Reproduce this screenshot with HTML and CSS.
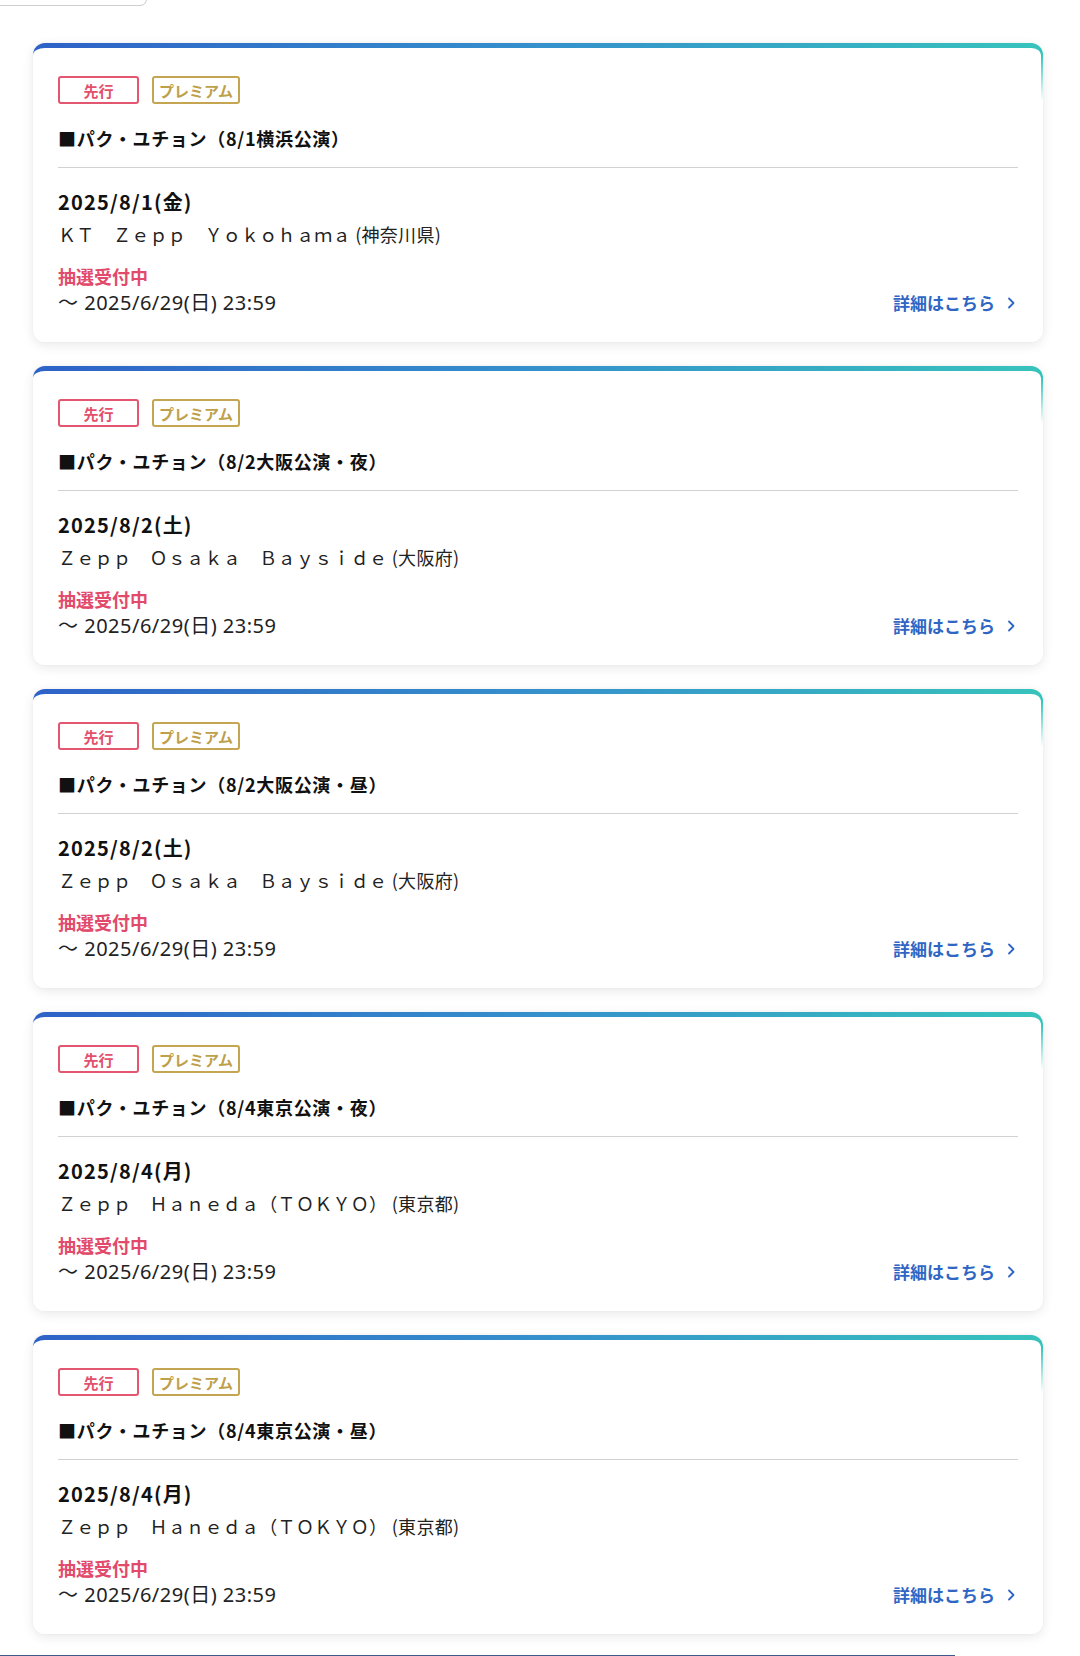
FILE: index.html
```html
<!DOCTYPE html>
<html lang="ja">
<head>
<meta charset="utf-8">
<title>公演一覧</title>
<link rel="stylesheet" href="styles.css">
</head>
<body>
<div class="top-btn"></div>
<ul class="list">
  <li class="card">
    <div class="tags"><span class="tag tag-red">先行</span><span class="tag tag-gold">プレミアム</span></div>
    <h2 class="title">■パク・ユチョン（8/1横浜公演）</h2>
    <div class="date">2025/8/1(金)</div>
    <div class="venue">ＫＴ　Ｚｅｐｐ　Ｙｏｋｏｈａｍａ (神奈川県)</div>
    <div class="status">抽選受付中</div>
    <div class="foot"><span class="deadline">〜 2025/6/29(日) 23:59</span><a class="more" href="#">詳細はこちら<svg class="chev" viewBox="0 0 8 12" width="8" height="12"><path d="M2 1.5 6.5 6 2 10.5" fill="none" stroke="currentColor" stroke-width="1.8" stroke-linecap="round" stroke-linejoin="round"/></svg></a></div>
  </li>
  <li class="card">
    <div class="tags"><span class="tag tag-red">先行</span><span class="tag tag-gold">プレミアム</span></div>
    <h2 class="title">■パク・ユチョン（8/2大阪公演・夜）</h2>
    <div class="date">2025/8/2(土)</div>
    <div class="venue">Ｚｅｐｐ　Ｏｓａｋａ　Ｂａｙｓｉｄｅ (大阪府)</div>
    <div class="status">抽選受付中</div>
    <div class="foot"><span class="deadline">〜 2025/6/29(日) 23:59</span><a class="more" href="#">詳細はこちら<svg class="chev" viewBox="0 0 8 12" width="8" height="12"><path d="M2 1.5 6.5 6 2 10.5" fill="none" stroke="currentColor" stroke-width="1.8" stroke-linecap="round" stroke-linejoin="round"/></svg></a></div>
  </li>
  <li class="card">
    <div class="tags"><span class="tag tag-red">先行</span><span class="tag tag-gold">プレミアム</span></div>
    <h2 class="title">■パク・ユチョン（8/2大阪公演・昼）</h2>
    <div class="date">2025/8/2(土)</div>
    <div class="venue">Ｚｅｐｐ　Ｏｓａｋａ　Ｂａｙｓｉｄｅ (大阪府)</div>
    <div class="status">抽選受付中</div>
    <div class="foot"><span class="deadline">〜 2025/6/29(日) 23:59</span><a class="more" href="#">詳細はこちら<svg class="chev" viewBox="0 0 8 12" width="8" height="12"><path d="M2 1.5 6.5 6 2 10.5" fill="none" stroke="currentColor" stroke-width="1.8" stroke-linecap="round" stroke-linejoin="round"/></svg></a></div>
  </li>
  <li class="card">
    <div class="tags"><span class="tag tag-red">先行</span><span class="tag tag-gold">プレミアム</span></div>
    <h2 class="title">■パク・ユチョン（8/4東京公演・夜）</h2>
    <div class="date">2025/8/4(月)</div>
    <div class="venue">Ｚｅｐｐ　Ｈａｎｅｄａ（ＴＯＫＹＯ） (東京都)</div>
    <div class="status">抽選受付中</div>
    <div class="foot"><span class="deadline">〜 2025/6/29(日) 23:59</span><a class="more" href="#">詳細はこちら<svg class="chev" viewBox="0 0 8 12" width="8" height="12"><path d="M2 1.5 6.5 6 2 10.5" fill="none" stroke="currentColor" stroke-width="1.8" stroke-linecap="round" stroke-linejoin="round"/></svg></a></div>
  </li>
  <li class="card">
    <div class="tags"><span class="tag tag-red">先行</span><span class="tag tag-gold">プレミアム</span></div>
    <h2 class="title">■パク・ユチョン（8/4東京公演・昼）</h2>
    <div class="date">2025/8/4(月)</div>
    <div class="venue">Ｚｅｐｐ　Ｈａｎｅｄａ（ＴＯＫＹＯ） (東京都)</div>
    <div class="status">抽選受付中</div>
    <div class="foot"><span class="deadline">〜 2025/6/29(日) 23:59</span><a class="more" href="#">詳細はこちら<svg class="chev" viewBox="0 0 8 12" width="8" height="12"><path d="M2 1.5 6.5 6 2 10.5" fill="none" stroke="currentColor" stroke-width="1.8" stroke-linecap="round" stroke-linejoin="round"/></svg></a></div>
  </li>
</ul>
<div class="bottom-bar"></div>
</body>
</html>
```

FILE: styles.css
```css
* { box-sizing: border-box; }
html, body { margin: 0; padding: 0; background: #fff; }
body {
  font-family: "Noto Sans CJK JP", "Noto Sans", sans-serif;
  color: #1a1a1a;
  overflow: hidden;
  height: 1656px;
}
.top-btn {
  width: 147px;
  height: 40px;
  margin-top: -34px;
  border: 1px solid #cfcfcf;
  border-left: none;
  border-radius: 0 0 7px 0;
  background: #fff;
}
.list {
  list-style: none;
  margin: 37px 37px 0 33px;
  padding: 0;
  display: flex;
  flex-direction: column;
  gap: 24px;
}
.card {
  height: 299px;
  border-style: solid;
  border-color: transparent;
  border-width: 5px 2px 0 0;
  border-radius: 12px;
  background:
    linear-gradient(#fff, #fff) padding-box,
    linear-gradient(to bottom, rgba(255,255,255,0) 0, rgba(255,255,255,0) 12px, #fff 58px) border-box,
    linear-gradient(90deg, #2e62c7 0%, #3590cc 50%, #37c3bc 100%) border-box;
  box-shadow: 0 3px 12px rgba(0, 0, 0, 0.09), 0 0 3px rgba(0,0,0,0.04);
  padding: 28px 23px 0 25px;
}
.tags { display: flex; gap: 13px; }
.tag {
  display: inline-flex;
  justify-content: center;
  align-items: center;
  height: 28px;
  min-width: 81px;
  padding: 0 5px;
  border: 2px solid;
  border-radius: 3px;
  font-size: 15px;
  font-weight: 700;
  line-height: 1;
}
.tag-red { color: #e2506c; border-color: #e2566f; }
.tag-gold { color: #bea04a; border-color: #c3a552; }
.title {
  margin: 20px 0 0;
  font-size: 18px;
  font-weight: 700;
  letter-spacing: 0.7px;
  line-height: 28px;
  padding-bottom: 15px;
  border-bottom: 1px solid #d2d2d2;
  color: #111;
}
.date {
  margin-top: 19px;
  font-size: 20px;
  font-weight: 700;
  letter-spacing: 1.2px;
  line-height: 30px;
  color: #111;
}
.venue {
  margin-top: 2px;
  font-size: 18px;
  letter-spacing: 0.3px;
  line-height: 30px;
  color: #222;
}
.status {
  margin-top: 14px;
  font-size: 18px;
  font-weight: 700;
  line-height: 26px;
  color: #e24a6c;
}
.foot {
  display: flex;
  justify-content: space-between;
  align-items: center;
  line-height: 28px;
}
.deadline {
  font-family: "Noto Sans", "Noto Sans CJK JP", sans-serif;
  font-size: 20px;
  letter-spacing: 0.5px;
  color: #222;
}
.more {
  display: inline-flex;
  align-items: center;
  gap: 12px;
  font-size: 17px;
  font-weight: 700;
  color: #2f66c4;
  text-decoration: none;
  margin-right: 3px;
}
.chev { display: block; }
.bottom-bar {
  width: 955px;
  height: 10px;
  margin-top: 21px;
  background: #3d5a8b;
}
```
